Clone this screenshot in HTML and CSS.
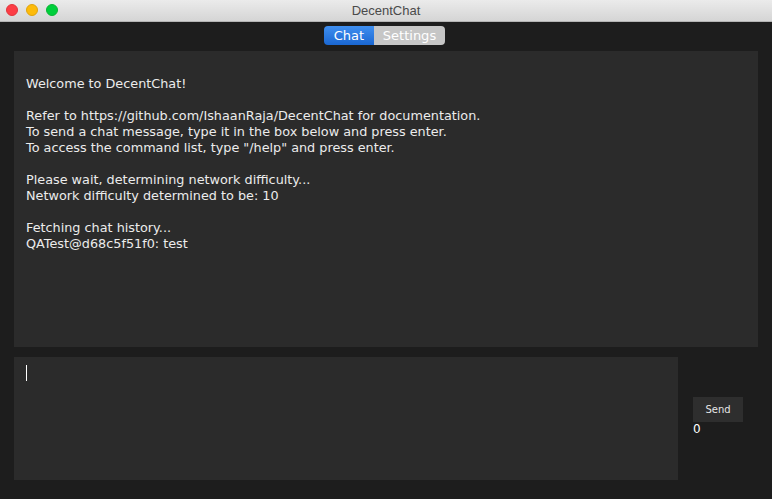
FILE: index.html
```html
<!DOCTYPE html>
<html lang="en">

<head>
    <meta charset="UTF-8" />
    <title>DecentChat</title>
    <link rel="stylesheet" href="styles.css">
</head>

<body>
    <div class="window">
        <div class="titlebar">
            <div class="lights">
                <span class="light red"></span>
                <span class="light yellow"></span>
                <span class="light green"></span>
            </div>
            <div class="title">DecentChat</div>
        </div>

        <div class="tabs">
            <span class="tab active">Chat</span>
            <span class="tab">Settings</span>
        </div>

        <div class="output">
            <p>Welcome to DecentChat!</p>
            <p>&nbsp;</p>
            <p>Refer to https://github.com/IshaanRaja/DecentChat for documentation.</p>
            <p>To send a chat message, type it in the box below and press enter.</p>
            <p>To access the command list, type "/help" and press enter.</p>
            <p>&nbsp;</p>
            <p>Please wait, determining network difficulty...</p>
            <p>Network difficulty determined to be: 10</p>
            <p>&nbsp;</p>
            <p>Fetching chat history...</p>
            <p>QATest@d68c5f51f0: test</p>
        </div>

        <div class="compose">
            <div class="input"><span class="caret"></span></div>
            <div class="side">
                <button class="send">Send</button>
                <div class="count">0</div>
            </div>
        </div>
    </div>
</body>

</html>
```

FILE: styles.css
```css
body {
    margin: 0;
    background: #1d1d1d;
    font-family: 'DejaVu Sans', 'Noto Sans', sans-serif;
    color: #ececec;
}

.window {
    width: 772px;
    height: 499px;
    display: flex;
    flex-direction: column;
}

.titlebar {
    height: 21px;
    border-bottom: 1px solid #b4b4b4;
    background: linear-gradient(#ebebeb, #d5d5d5);
    display: flex;
    align-items: center;
    justify-content: center;
    position: relative;
}

.lights {
    position: absolute;
    left: 6px;
    top: 4px;
    display: flex;
    gap: 8px;
}

.light {
    width: 12px;
    height: 12px;
    border-radius: 50%;
    box-sizing: border-box;
}

.red { background: #fc3d45; border: 1px solid #e2353c; }
.yellow { background: #fdbb0a; border: 1px solid #e0a40b; }
.green { background: #00cf3b; border: 1px solid #0bb534; }

.title {
    font-family: 'Liberation Sans', 'Noto Sans', sans-serif;
    font-size: 13px;
    color: #4a4a4a;
}

.tabs {
    display: flex;
    justify-content: center;
    margin-top: 4px;
    padding-right: 3px;
    height: 19px;
}

.tab {
    font-size: 13px;
    line-height: 19px;
    color: #fff;
    background: #c6c6c6;
    text-align: center;
    width: 71px;
    border-radius: 0 4px 4px 0;
}

.tab.active {
    background: linear-gradient(#3f8ff0, #1a67d2);
    width: 50px;
    border-radius: 4px 0 0 4px;
}

.output {
    margin: 6px 14px 0;
    height: 296px;
    box-sizing: border-box;
    background: #2b2b2b;
    padding: 25px 12px;
    font-size: 12.8px;
    line-height: 16px;
}

.output p {
    margin: 0;
    white-space: pre;
}

.compose {
    display: flex;
    margin: 10px 0 0 14px;
}

.input {
    width: 664px;
    height: 123px;
    background: #2b2b2b;
    padding: 8px 12px;
    box-sizing: border-box;
}

.caret {
    display: block;
    width: 1px;
    height: 16px;
    background: #fff;
}

.side {
    padding: 40px 0 0 15px;
}

.send {
    display: block;
    width: 50px;
    height: 25px;
    border: none;
    background: #2e2e2e;
    color: #e6e6e6;
    font-family: 'DejaVu Sans', sans-serif;
    font-size: 10px;
    padding: 0;
}

.count {
    font-size: 12px;
    line-height: 14px;
    color: #fff;
}
```
